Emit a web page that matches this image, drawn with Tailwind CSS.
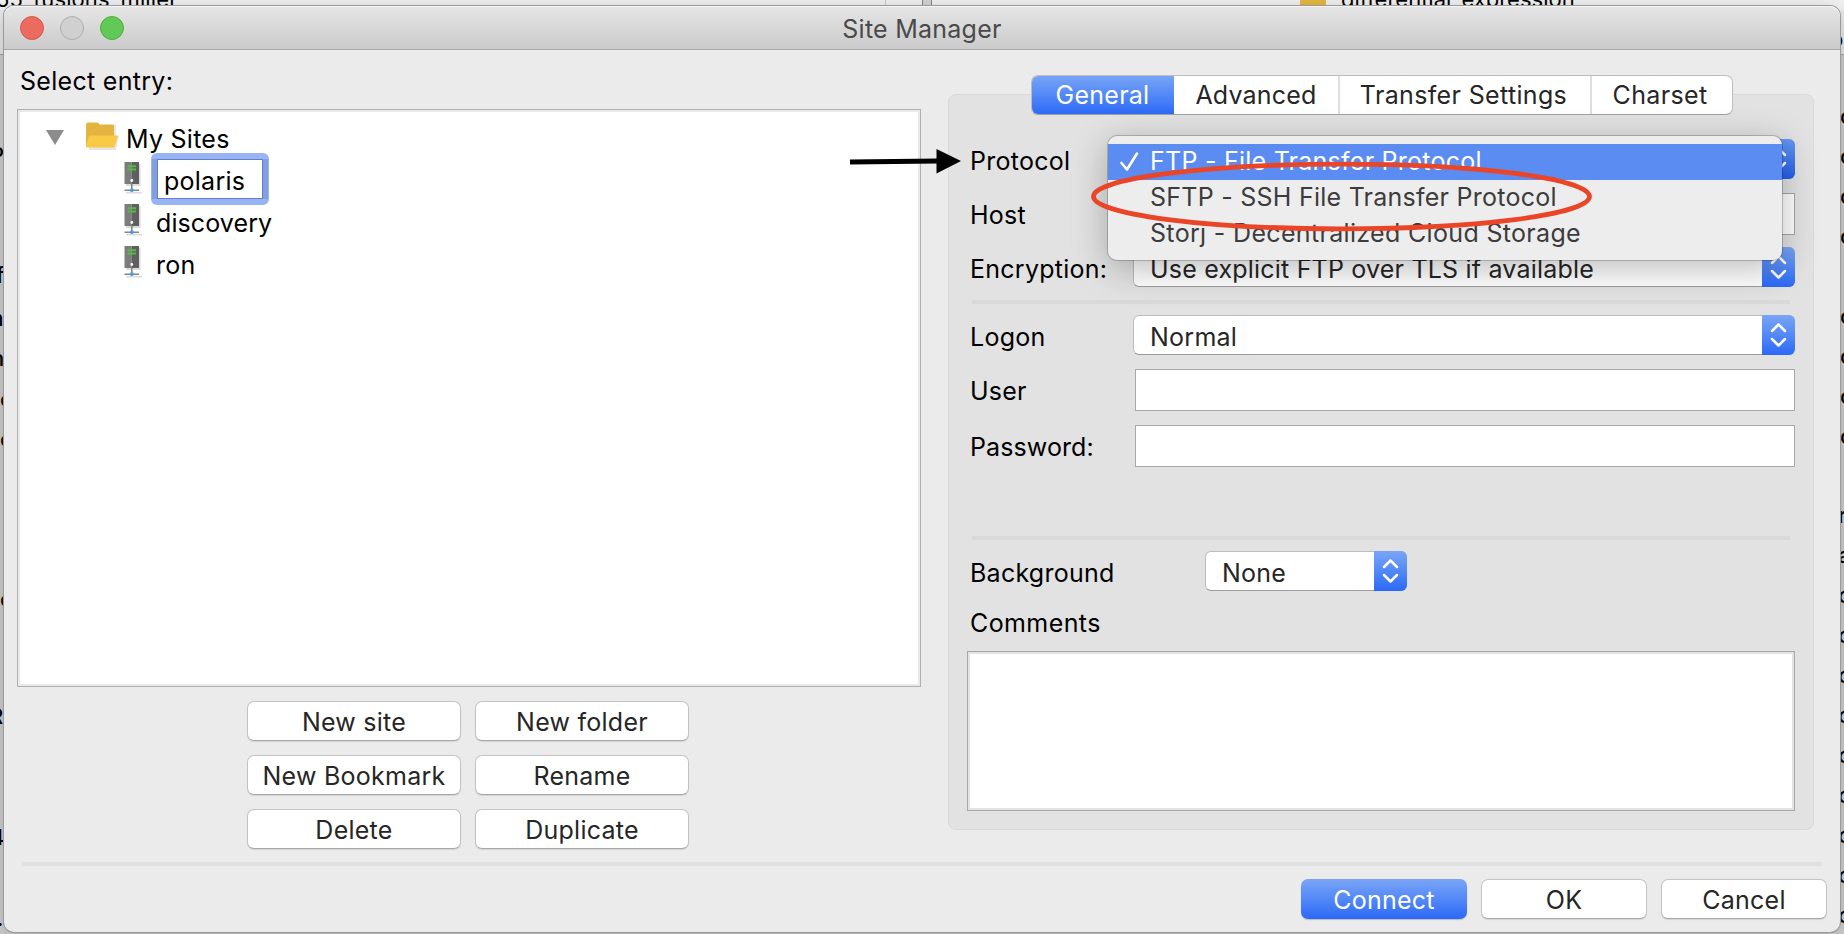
<!DOCTYPE html>
<html lang="en">
<head>
<meta charset="utf-8">
<title>Site Manager</title>
<script src="https://cdn.jsdelivr.net/npm/@tailwindcss/browser@4"></script>
</head>
<body class="relative h-[934px] w-[1844px] overflow-hidden bg-[#d2d2d2] font-['Inter',sans-serif] text-[25px] leading-9 tracking-[0.25px] text-black">

<!-- Symbols shared by the rows and popup buttons -->
<svg class="hidden">
  <symbol id="server" viewBox="0 0 18 33">
    <path d="M2 2h14.500v22H2zM2 30h16v1.500H2z" fill="#000" opacity=".14"/>
    <path d="M.5 0h7v22h-7z" fill="#7c7c7c"/>
    <path d="M7.500 0H15v22H7.500z" fill="#5f5f5f"/>
    <path d="M3.500 3.200h8.500v2H3.500zM3.500 6.400h8.500v2H3.500z" fill="#58b947"/>
    <circle cx="7.800" cy="18.500" r="1.400" fill="#fff"/>
    <path d="M7 22h1.600v6H7zM.5 27.500H15V29H.5z" fill="#858585"/>
    <circle cx="7.800" cy="28.200" r="1.900" fill="#4a9ae8"/>
  </symbol>
  <symbol id="updown" viewBox="0 0 33 40">
    <path d="M10 16l6.500-6.500L23 16M10 24l6.500 6.500L23 24" fill="none" stroke="#fff" stroke-width="2.500" stroke-linecap="round" stroke-linejoin="round"/>
  </symbol>
</svg>

<!-- Main application window behind the dialog -->
<div aria-hidden="true" class="absolute inset-0 overflow-hidden text-[22px] leading-6">
  <div class="flex h-[10px] bg-[#f3f3f3]">
    <div class="w-[886px] border-r border-[#ccc]"></div>
    <div class="w-[37px] border-r border-[#888]"></div>
    <div class="w-[9px] border-r border-[#888] bg-[#d6d6d6]"></div>
    <div class="ml-[368px] w-[26px] bg-[#e6b93f]"></div>
  </div>
  <div class="flex h-[45px] justify-between">
    <div class="w-1 border-b border-[#aaa] bg-[#ececec]"></div>
    <div class="w-1 border-b border-[#aaa] bg-[#ececec]"></div>
  </div>
  <span class="absolute -top-[13px] -left-[4px] whitespace-nowrap tracking-[0.1px]">55_fusions_miller</span>
  <span class="absolute -top-[13px] left-[1341px] whitespace-nowrap tracking-normal">differential_expression</span>
  <span class="absolute top-[143px] -left-[10px] font-medium">P</span>
  <span class="absolute top-[263px] -left-[4px] font-medium">f</span>
  <span class="absolute top-[306px] -left-[16px] font-medium">m</span>
  <span class="absolute top-[346px] -left-[9px] font-medium">n</span>
  <div class="absolute top-[387px] left-0 flex flex-col font-medium"><span class="h-10">c</span><span class="h-[160px]">c</span><span>c</span></div>
  <span class="absolute top-[704px] -left-[11px] font-medium">R</span>
  <span class="absolute top-[825px] -left-[10px] font-medium">4</span>
  <span class="absolute top-[906px] -left-[3px]">.</span>
  <span class="absolute top-[27px] left-[1830px] font-medium">o</span>
  <div class="absolute top-[104px] left-[1840px] flex flex-col font-medium">
    <span class="h-10">c</span><span class="h-10">c</span><span class="h-10">c</span><span class="h-20">c</span><span class="h-10">c</span><span class="h-10">c</span><span class="h-10">c</span><span class="h-10">c</span>
  </div>
  <div class="absolute top-[503px] left-[1838px] flex flex-col font-medium">
    <span class="h-10">r</span><span class="h-10">a</span><span class="h-10">c</span><span class="h-10">c</span><span class="h-10">c</span><span class="h-10">c</span><span class="h-10">c</span><span class="h-10">c</span><span class="h-10">c</span><span class="h-10">c</span><span class="h-10">c</span>
  </div>
</div>

<!-- Site Manager dialog -->
<main class="absolute top-[6px] left-1 flex h-[926px] w-[1836px] flex-col rounded-[10px] bg-[#ebebeb] shadow-[0_0_0_1px_#9b9b9b,0_6px_24px_rgba(0,0,0,0.25)]">
  <header class="relative flex h-11 shrink-0 items-center rounded-t-[10px] border-b border-[#a6a6a6] bg-linear-to-b from-[#e6e6e6] to-[#cbcbcb] shadow-[inset_0_1px_0_#f5f5f5]">
    <div class="flex gap-4 pl-4">
      <span class="size-6 rounded-full border border-[#d8564b] bg-[#ec6b5f]"></span>
      <span class="size-6 rounded-full border border-[#adadad] bg-[#d0d0d0]"></span>
      <span class="size-6 rounded-full border border-[#53ac41] bg-[#61c955]"></span>
    </div>
    <h1 class="absolute inset-x-0 top-[5px] text-center text-[#4a4a4a]">Site Manager</h1>
  </header>

  <div class="flex h-[812px] shrink-0 pl-[13px]">
    <!-- Site tree and its actions -->
    <section class="w-[904px] pt-[13px]">
      <p class="pl-[3px] tracking-[0.3px]">Select entry:</p>
      <div class="mt-[10px] h-[578px] border border-[#b0b0b0] bg-white pl-[28px] pt-[11px] shadow-[inset_0_0_0_2px_#e9e9e9]">
        <div class="flex h-[42px]">
          <svg class="mt-[9px] h-[15px] w-[18px]" viewBox="0 0 18 15"><path d="M0 0h18L9 15z" fill="#8c8c8c"/></svg>
          <svg class="ml-[22px] mt-px h-[28px] w-[33px]" viewBox="0 0 33 28">
            <path d="M2 3h28v11h3l-3 14H3z" fill="#000" opacity=".1"/>
            <path d="M0 2.500Q0 .5 2 .5h9q2 0 2.500 2h13q1.500 0 1.500 1.500v15L0 25z" fill="#e3b440"/>
            <path d="M4.500 13.500h27.500l-3.500 12H1.500Q0 25.500 0 24l2.500-9q.5-1.500 2-1.500z" fill="#f9ca45"/>
          </svg>
          <span class="ml-[7px]">My Sites</span>
        </div>
        <div class="flex h-[42px]">
          <svg class="ml-[78px] -mt-px h-[33px] w-[18px]"><use href="#server"/></svg>
          <div class="z-10 -mt-[10px] ml-[9px] h-[52px] w-[118px] rounded-[6px] bg-[#98b4f4] p-[6px]">
            <div class="h-10 border border-[#5f7fc8] bg-white pl-[6px] pt-[3px] shadow-[-5px_0_0_#839fe0,5px_0_0_#839fe0]">polaris</div>
          </div>
        </div>
        <div class="flex h-[42px]">
          <svg class="ml-[78px] -mt-px h-[33px] w-[18px]"><use href="#server"/></svg>
          <span class="ml-[14px] tracking-[0.1px]">discovery</span>
        </div>
        <div class="flex h-[42px]">
          <svg class="ml-[78px] -mt-px h-[33px] w-[18px]"><use href="#server"/></svg>
          <span class="ml-[14px]">ron</span>
        </div>
      </div>
      <div class="ml-[230px] mt-[14px] grid w-[442px] grid-cols-2 gap-x-[14px] gap-y-[14px] text-center text-[#262626]">
        <button class="h-10 rounded-[7px] border border-[#c4c4c4] border-b-[#a9a9a9] bg-white pt-px shadow-[0_1px_1px_rgba(0,0,0,0.1)]">New site</button>
        <button class="h-10 rounded-[7px] border border-[#c4c4c4] border-b-[#a9a9a9] bg-white pt-px shadow-[0_1px_1px_rgba(0,0,0,0.1)]">New folder</button>
        <button class="h-10 rounded-[7px] border border-[#c4c4c4] border-b-[#a9a9a9] bg-white pt-px shadow-[0_1px_1px_rgba(0,0,0,0.1)]">New Bookmark</button>
        <button class="h-10 rounded-[7px] border border-[#c4c4c4] border-b-[#a9a9a9] bg-white pt-px shadow-[0_1px_1px_rgba(0,0,0,0.1)]">Rename</button>
        <button class="h-10 rounded-[7px] border border-[#c4c4c4] border-b-[#a9a9a9] bg-white pt-px shadow-[0_1px_1px_rgba(0,0,0,0.1)]">Delete</button>
        <button class="h-10 rounded-[7px] border border-[#c4c4c4] border-b-[#a9a9a9] bg-white pt-px shadow-[0_1px_1px_rgba(0,0,0,0.1)]">Duplicate</button>
      </div>
    </section>

    <!-- Site settings -->
    <section class="ml-[27px] w-[866px] pt-[25px]">
      <nav class="relative z-10 -mb-[21px] ml-[83px] flex h-10 w-[702px] overflow-hidden rounded-[7px] border border-[#bdbdbd] border-b-[#a0a0a0] bg-white text-center text-[#262626]">
        <div class="-my-px -ml-px w-[143px] bg-linear-to-b from-[#7aa5f5] to-[#2b68f7] pt-[2px] text-white">General</div>
        <div class="w-[166px] border-r-2 border-[#dedede] pt-px tracking-[0.2px]">Advanced</div>
        <div class="w-[252px] border-r-2 border-[#dedede] pt-px pr-[3px] tracking-[0.35px]">Transfer Settings</div>
        <div class="flex-1 pt-px pr-[4px] tracking-[0.35px]">Charset</div>
      </nav>
      <div class="h-[736px] rounded-[8px] border border-[#d9d9d9] bg-[#e2e2e2] pl-[21px] pt-11">
        <div class="flex h-10">
          <label class="w-[163px] pt-1">Protocol</label>
          <div class="flex w-[662px] rounded-[6px] border border-[#bdbdbd] bg-white">
            <svg class="-my-px ml-auto -mr-px h-10 w-[33px] rounded-r-[6px] bg-linear-to-b from-[#6598f3] to-[#2560ee]"><use href="#updown"/></svg>
          </div>
        </div>
        <div class="mt-[14px] flex h-[42px]">
          <label class="w-[165px] pt-1">Host</label>
          <div class="w-[660px] border border-[#a8a8a8] bg-white"></div>
        </div>
        <div class="mt-3 flex h-10">
          <label class="w-[163px] pt-1">Encryption:</label>
          <div class="flex w-[662px] rounded-[6px] border border-[#bdbdbd] border-b-[#9c9c9c] bg-white pl-[16px] pt-[3px] tracking-[0.2px] text-[#262626]">Use explicit FTP over TLS if available
            <svg class="-mt-1 ml-auto -mr-px h-10 w-[33px] rounded-r-[6px] bg-linear-to-b from-[#7aa5f5] to-[#2b68f7]"><use href="#updown"/></svg>
          </div>
        </div>
        <div class="ml-[2px] mt-[13px] h-1 w-[818px] bg-[#d9d9d9]"></div>
        <div class="mt-[11px] flex h-10">
          <label class="w-[163px] pt-1">Logon</label>
          <div class="flex w-[662px] rounded-[6px] border border-[#bdbdbd] border-b-[#9c9c9c] bg-white pl-[16px] pt-[3px] text-[#262626]">Normal
            <svg class="-mt-1 ml-auto -mr-px h-10 w-[33px] rounded-r-[6px] bg-linear-to-b from-[#7aa5f5] to-[#2b68f7]"><use href="#updown"/></svg>
          </div>
        </div>
        <div class="mt-[14px] flex h-[42px]">
          <label class="w-[165px] pt-1">User</label>
          <div class="w-[660px] border border-[#a8a8a8] bg-white"></div>
        </div>
        <div class="mt-[14px] flex h-[42px]">
          <label class="w-[165px] pt-1 tracking-[0.1px]">Password:</label>
          <div class="w-[660px] border border-[#a8a8a8] bg-white"></div>
        </div>
        <div class="ml-[2px] mt-[69px] h-1 w-[818px] bg-[#d9d9d9]"></div>
        <div class="mt-[11px] flex h-10">
          <label class="w-[235px] pt-1">Background</label>
          <div class="flex w-[202px] rounded-[6px] border border-[#bdbdbd] border-b-[#9c9c9c] bg-white pl-[16px] pt-[3px] text-[#262626]">None
            <svg class="-mt-1 ml-auto -mr-px h-10 w-[33px] rounded-r-[6px] bg-linear-to-b from-[#7aa5f5] to-[#2b68f7]"><use href="#updown"/></svg>
          </div>
        </div>
        <label class="mt-[14px] block tracking-[0.4px]">Comments</label>
        <div class="-ml-[3px] mt-[10px] h-[160px] w-[828px] border border-[#a8a8a8] bg-white shadow-[inset_0_0_0_2px_#e3e3e3]"></div>
      </div>
    </section>
  </div>

  <div class="ml-[18px] h-1 w-[1800px] shrink-0 bg-[#e1e1e1]"></div>
  <footer class="mt-[13px] flex justify-end gap-[14px] pr-[13px] text-[#262626]">
    <button class="h-10 w-[166px] rounded-[7px] bg-linear-to-b from-[#7aa5f5] to-[#2b68f7] pt-[2px] text-white shadow-[0_1px_1px_rgba(0,0,0,0.2)]">Connect</button>
    <button class="h-10 w-[166px] rounded-[7px] border border-[#c4c4c4] border-b-[#a9a9a9] bg-white pt-px shadow-[0_1px_1px_rgba(0,0,0,0.1)]">OK</button>
    <button class="h-10 w-[166px] rounded-[7px] border border-[#c4c4c4] border-b-[#a9a9a9] bg-white pt-px shadow-[0_1px_1px_rgba(0,0,0,0.1)]">Cancel</button>
  </footer>
</main>

<!-- Open protocol menu -->
<div class="absolute top-[136px] left-[1108px] z-20 h-[124px] w-[674px] rounded-[9px] bg-[#ededee] pt-2 text-[#3c3c3c] shadow-[0_0_0_1px_rgba(0,0,0,0.2),0_8px_36px_rgba(0,0,0,0.28)]">
  <div class="flex h-9 bg-[#5a8cf1] text-white">
    <svg class="ml-3 mt-2 h-5 w-[19px]" viewBox="0 0 19 20" fill="none" stroke="#fff" stroke-width="2.600" stroke-linecap="round" stroke-linejoin="round"><path d="M1.500 11l5.500 6.500L17 1.500"/></svg>
    <span class="ml-[11px] -mt-px">FTP - File Transfer Protocol</span>
  </div>
  <div class="-mt-px h-9 pl-[42px]">SFTP - SSH File Transfer Protocol</div>
  <div class="h-9 pl-[42px] tracking-[0.33px]">Storj - Decentralized Cloud Storage</div>
</div>

<!-- Annotations -->
<svg class="pointer-events-none absolute top-0 left-0 z-30 h-[934px] w-[1844px]">
  <ellipse cx="1341.500" cy="196.500" rx="248" ry="32.300" fill="none" stroke="#ea4527" stroke-width="4.800"/>
  <path d="M850 162l88-1" stroke="#000" stroke-width="5"/>
  <path d="M936.500 149l24.500 12-24.500 12.500z"/>
</svg>
</body>
</html>
